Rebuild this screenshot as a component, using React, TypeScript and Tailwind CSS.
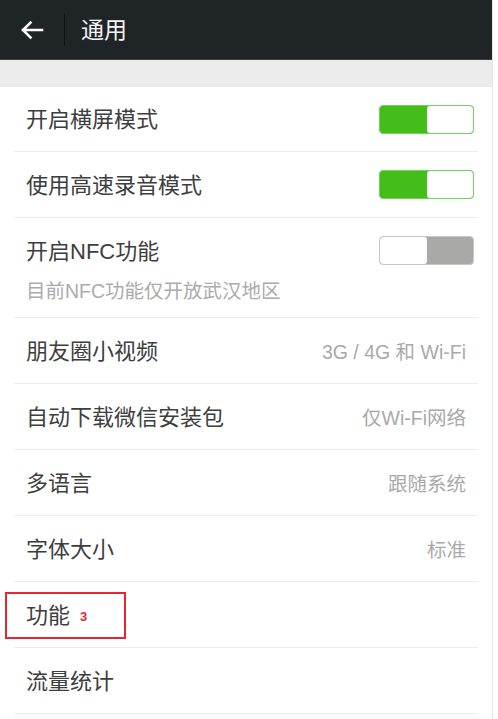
import { useState } from "react";

type Row = {
  label: string;
  value?: string;
  toggle?: boolean;
  sub?: string;
  badge?: string;
};

const rows: Row[] = [
  { label: "开启横屏模式", toggle: true },
  { label: "使用高速录音模式", toggle: true },
  { label: "开启NFC功能", toggle: false, sub: "目前NFC功能仅开放武汉地区" },
  { label: "朋友圈小视频", value: "3G / 4G 和 Wi-Fi" },
  { label: "自动下载微信安装包", value: "仅Wi-Fi网络" },
  { label: "多语言", value: "跟随系统" },
  { label: "字体大小", value: "标准" },
  { label: "功能", badge: "3" },
  { label: "流量统计" },
];

function Toggle({ on, onClick }: { on: boolean; onClick: () => void }) {
  return (
    <button
      onClick={onClick}
      className={
        "flex h-[29px] w-[95px] overflow-hidden rounded-[4px] border-[1.5px] " +
        (on ? "border-[#6fd45a] bg-[#44bd1b]" : "border-[#c9c9c9] bg-[#a9aaa8]")
      }
    >
      {on && <div className="h-full w-[47px]" />}
      <div className="h-full w-[47px] rounded-[3px] bg-white" />
    </button>
  );
}

export default function App() {
  const [switches, setSwitches] = useState<boolean[]>(rows.map((r) => !!r.toggle));

  return (
    <div
      className="min-h-[719px] w-[498px] bg-white"
      style={{ fontFamily: '"Liberation Sans", "Noto Sans CJK SC", sans-serif' }}
    >
      <div className="min-h-[719px] w-[493px] border-r border-[#e6e6e6] bg-white">
        {/* 顶部栏 */}
        <div className="flex h-[59px] items-center bg-[#1f2427]">
          <div className="flex w-[64px] justify-center">
            <svg width="24" height="20" viewBox="0 0 24 20" fill="none">
              <path
                d="M22 10H3M10.5 2.5L3 10l7.5 7.5"
                stroke="#ffffff"
                strokeWidth="2.6"
                strokeLinecap="square"
              />
            </svg>
          </div>
          <div className="h-[33px] w-px bg-[#101314]" />
          <span className="ml-[16px] text-[23px] leading-[30px] text-[#f4f4f4]">通用</span>
        </div>
        <div className="h-[28px] border-t border-[#3a3f42] bg-[#ebebeb]" />

        {/* 设置列表 */}
        <div className="relative mx-[14px]">
          {rows.map((r, i) => (
            <div
              key={r.label}
              className={
                "flex justify-between border-b border-[#ececec] pl-[12px] " +
                (r.sub
                  ? "h-[100px] items-start pt-[19px]"
                  : (i === 0 ? "h-[65px]" : "h-[66px]") + " items-center pt-[2px]") +
                (r.toggle !== undefined ? " pr-[4px]" : " pr-[12px]")
              }
            >
              <div className="flex flex-col">
                <div className="flex items-center">
                  <span className="text-[22px] leading-[30px] text-[#3e3e3e]">{r.label}</span>
                  {r.badge && (
                    <span className="ml-[10px] mt-[2px] text-[13px] font-bold text-[#e8262d]">
                      {r.badge}
                    </span>
                  )}
                </div>
                {r.sub && (
                  <span className="mt-[11px] text-[19.5px] leading-[26px] text-[#ababab]">
                    {r.sub}
                  </span>
                )}
              </div>
              {r.toggle !== undefined && (
                <div className={r.sub ? "-mt-px" : "-mt-[2px]"}>
                  <Toggle
                    on={switches[i]}
                    onClick={() =>
                      setSwitches((s) => s.map((v, j) => (j === i ? !v : v)))
                    }
                  />
                </div>
              )}
              {r.value && (
                <span className="text-[19.5px] leading-[26px] text-[#a9a9a9]">{r.value}</span>
              )}
            </div>
          ))}

          {/* 标注框 */}
          <div className="pointer-events-none absolute left-[-9px] top-[505px] h-[47px] w-[121px] border-2 border-[#e8262d]" />
        </div>
      </div>
    </div>
  );
}
